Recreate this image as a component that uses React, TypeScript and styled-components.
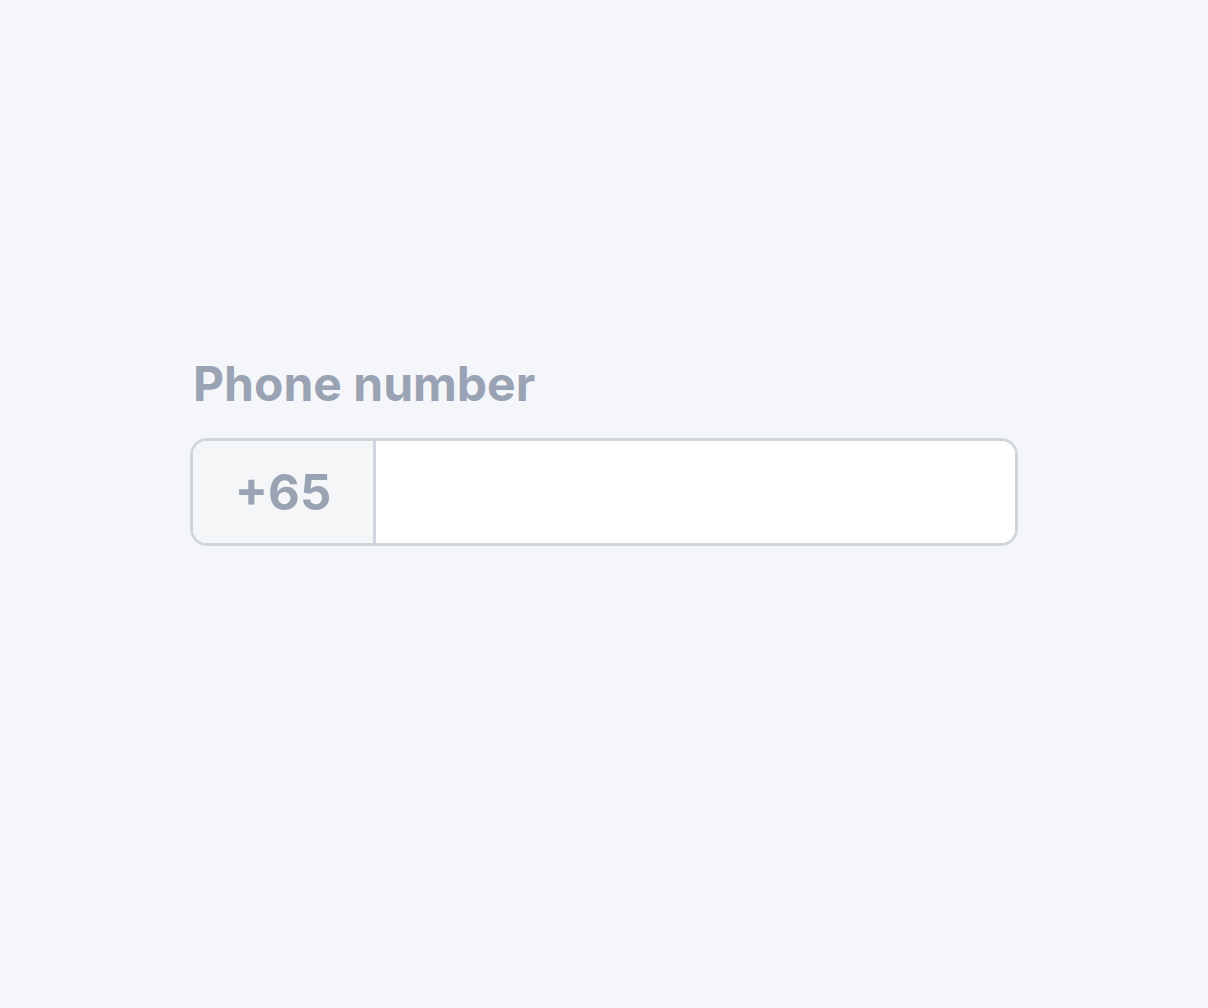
import React from "react";
import styled, { createGlobalStyle } from "styled-components";

const Global = createGlobalStyle`
  html, body { margin: 0; padding: 0; background: #f5f6fa; }
  body { font-family: Inter, "Liberation Sans", sans-serif; }
`;

const Page = styled.div`
  min-height: 1008px;
  display: flex;
  justify-content: center;
  padding-top: 352px;
  box-sizing: border-box;
`;

const Field = styled.div`
  width: 828px;
  display: flex;
  flex-direction: column;
`;

const Label = styled.label`
  font-size: 48px;
  font-weight: 700;
  color: #9aa3b3;
  line-height: 64px;
  margin-left: 3px;
  margin-bottom: 22px;
`;

const Group = styled.div`
  display: flex;
  height: 108px;
  border: 3px solid #d1d5dd;
  border-radius: 17px;
  overflow: hidden;
  box-sizing: border-box;
  background: #ffffff;
`;

const Prefix = styled.div`
  width: 180px;
  flex: none;
  display: flex;
  align-items: center;
  justify-content: center;
  background: #f5f6f8;
  border-right: 3px solid #d1d5dd;
  font-size: 49px;
  font-weight: 700;
  color: #9aa3b3;
`;

const Input = styled.input`
  flex: 1;
  border: none;
  outline: none;
  background: #ffffff;
  font-family: inherit;
  font-size: 40px;
  padding: 0 24px;
`;

export default function App() {
  return (
    <>
      <Global />
      <Page>
        <Field>
          <Label htmlFor="phone">Phone number</Label>
          <Group>
            <Prefix>+65</Prefix>
            <Input id="phone" type="tel" />
          </Group>
        </Field>
      </Page>
    </>
  );
}
